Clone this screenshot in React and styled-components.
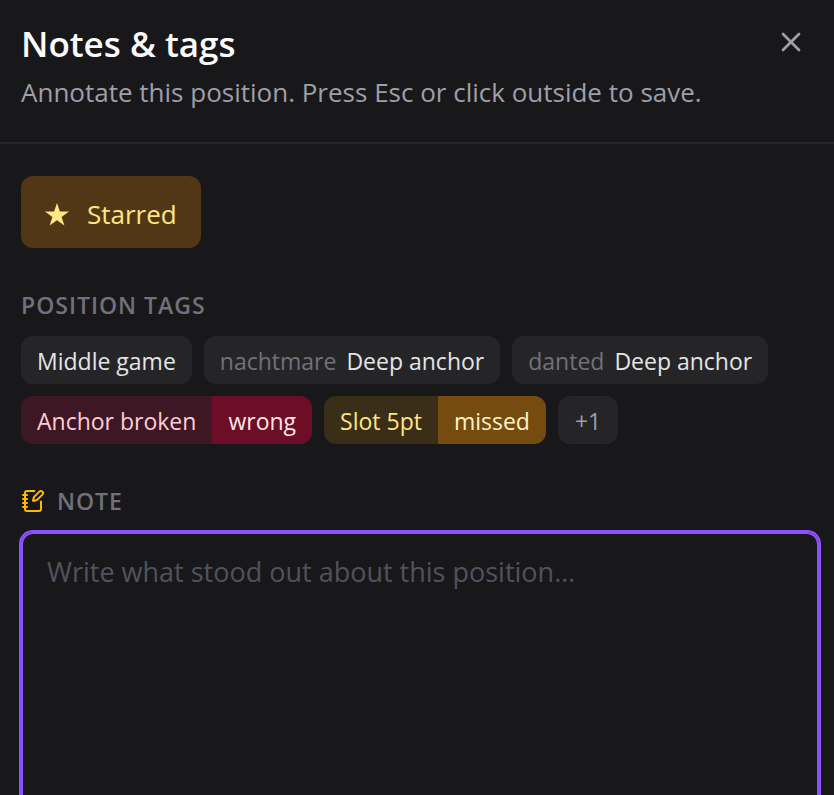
// App.jsx

import React, { useState } from 'react'
import styled, { createGlobalStyle } from 'styled-components'
import { NotebookPen, X } from 'lucide-react'

const positionTags = [
  { label: 'Middle game' },
  { owner: 'nachtmare', label: 'Deep anchor' },
  { owner: 'danted', label: 'Deep anchor' },
  { label: 'Anchor broken', verdict: 'wrong' },
  { label: 'Slot 5pt', verdict: 'missed' },
]

const tones = {
  plain: { background: '#252527', color: '#e4e4e7' },
  wrong: { background: '#3d1824', color: '#ffccd3', strong: '#6e0d28', strongColor: '#ffe4e6' },
  missed: { background: '#3a2e19', color: '#fee685', strong: '#764b0f', strongColor: '#fef3c6' },
}

const App = () => {
  const [starred, setStarred] = useState(true)
  const [note, setNote] = useState('')

  return (
    <Panel aria-labelledby="panel-title">
      <GlobalStyle />

      <Header>
        <div>
          <Title id="panel-title">Notes &amp; tags</Title>
          <Subtitle>Annotate this position. Press Esc or click outside to save.</Subtitle>
        </div>

        <CloseButton type="button" aria-label="Close">
          <X size={32} strokeWidth={2} />
        </CloseButton>
      </Header>

      <Body>
        <StarButton
          type="button"
          aria-pressed={starred}
          $active={starred}
          onClick={() => setStarred(!starred)}
        >
          <StarIcon />
          Starred
        </StarButton>

        <Section>
          <SectionTitle>Position tags</SectionTitle>

          <TagList>
            {positionTags.map((tag, index) => (
              <Tag key={index} $tone={tag.verdict || 'plain'}>
                <TagLabel>
                  {tag.owner && <Owner>{tag.owner}</Owner>}
                  {tag.label}
                </TagLabel>
                {tag.verdict && <Verdict $tone={tag.verdict}>{tag.verdict}</Verdict>}
              </Tag>
            ))}
            <li>
              <MoreButton type="button">+1</MoreButton>
            </li>
          </TagList>
        </Section>

        <Section>
          <NoteLabel htmlFor="note">
            <NotebookPen size={24} color="#ffb900" />
            Note
          </NoteLabel>

          <NoteInput
            id="note"
            placeholder="Write what stood out about this position…"
            value={note}
            onChange={(e) => setNote(e.target.value)}
          />
        </Section>
      </Body>
    </Panel>
  )
}

export default App


const StarIcon = () => (
  <svg width="24" height="24" viewBox="0 0 24 24" fill="currentColor" aria-hidden="true">
    <path d="M12 1l2.9 8.6h9.1l-7.4 5.3 2.8 8.6-7.4-5.3-7.4 5.3 2.8-8.6L0 9.6h9.1z" />
  </svg>
)

const GlobalStyle = createGlobalStyle`
  *,
  *::before,
  *::after {
    box-sizing: border-box;
  }

  body {
    margin: 0;
    background-color: #18181a;
    color: #fafafa;
    font-family: 'Segoe UI', 'Open Sans', sans-serif;
  }

  button,
  textarea {
    font-family: inherit;
  }
`

const Panel = styled.section`
  min-height: 100vh;
`

const Header = styled.header`
  display: flex;
  justify-content: space-between;
  align-items: flex-start;

  padding: 20px 27px 30px 21px;

  border-bottom: 2px solid #27272a;
`

const Title = styled.h2`
  margin: 0 0 4px;

  font-size: 35px;
  font-weight: 600;
  line-height: 48px;
`

const Subtitle = styled.p`
  margin: 0;

  color: #9f9fa9;

  font-size: 26px;
  line-height: 40px;
`

const CloseButton = styled.button`
  display: flex;

  margin-top: 6px;
  padding: 0;

  border: none;
  background: none;

  color: #9f9fa9;

  cursor: pointer;
`

const Body = styled.div`
  display: flex;
  flex-direction: column;
  align-items: flex-start;
  gap: 40px;

  padding: 32px 15px 32px 21px;
`

const StarButton = styled.button`
  display: flex;
  align-items: center;
  gap: 18px;

  height: 72px;
  padding: 4px 24px 0;

  border: none;
  border-radius: 12px;

  background-color: ${({ $active }) => ($active ? '#513716' : '#252527')};
  color: ${({ $active }) => ($active ? '#fee685' : '#9f9fa9')};

  font-size: 26px;

  cursor: pointer;
`

const Section = styled.section`
  width: 100%;
`

const SectionTitle = styled.h3`
  display: flex;
  align-items: center;
  gap: 12px;

  margin: 0 0 14px;

  color: #71717b;

  font-size: 23px;
  font-weight: 600;
  line-height: 34px;
  letter-spacing: 1px;
  text-transform: uppercase;
`

const NoteLabel = styled(SectionTitle).attrs({ as: 'label' })``

const TagList = styled.ul`
  display: flex;
  flex-wrap: wrap;
  gap: 12px;

  margin: 0;
  padding: 0;

  list-style: none;
`

const Tag = styled.li`
  display: flex;

  overflow: hidden;
  border-radius: 12px;

  background-color: ${({ $tone }) => tones[$tone].background};
  color: ${({ $tone }) => tones[$tone].color};

  font-size: 23px;
  line-height: 50px;
`

const TagLabel = styled.span`
  display: flex;
  gap: 10px;

  height: 48px;
  padding: 0 16px;
`

const Owner = styled.span`
  color: #71717b;
`

const Verdict = styled(TagLabel)`
  background-color: ${({ $tone }) => tones[$tone].strong};
  color: ${({ $tone }) => tones[$tone].strongColor};
`

const MoreButton = styled.button`
  height: 48px;
  padding: 2px 17px 0;

  border: none;
  border-radius: 12px;

  background-color: #252527;
  color: #9f9fa9;

  font-size: 23px;

  cursor: pointer;
`

const NoteInput = styled.textarea`
  display: block;

  width: 100%;
  min-height: 320px;
  padding: 18px 24px;

  border: 2px solid #8e51ff;
  border-radius: 12px;
  outline: none;
  box-shadow: 0 0 0 2px #8e51ff;

  background: transparent;
  color: #fafafa;

  font-size: 27px;
  line-height: 40px;

  resize: none;

  &::placeholder {
    color: #52525c;
  }
`
